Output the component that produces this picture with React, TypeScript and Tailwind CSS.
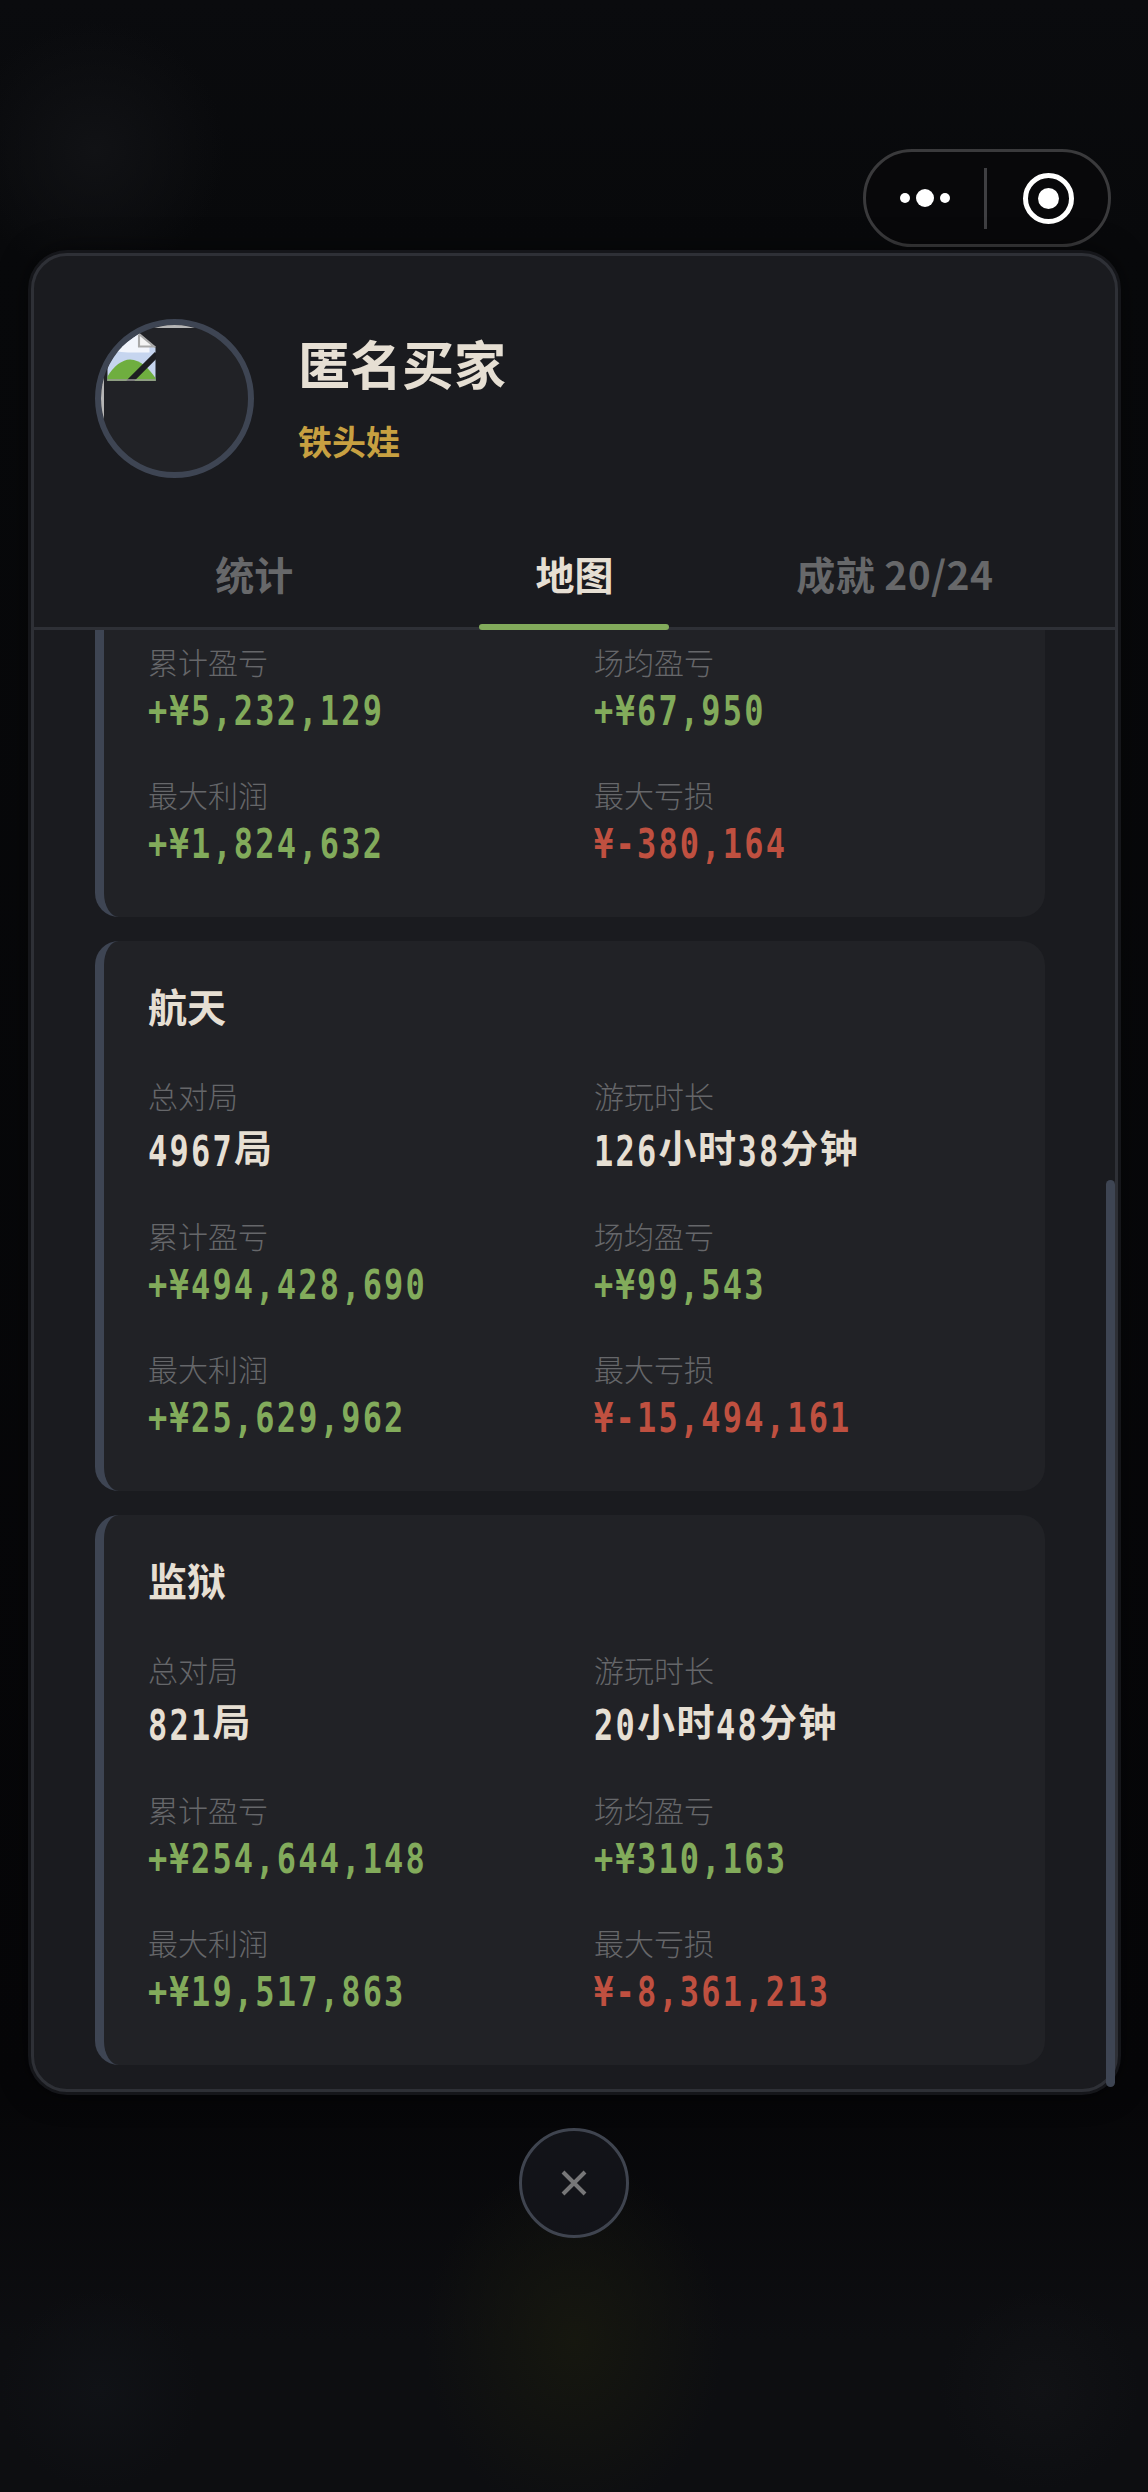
import React from "react";

const cjk = "font-['Noto_Sans_CJK_SC',sans-serif]";

function Val({ text, color, first }: { text: string; color: string; first?: boolean }) {
  const parts = text.match(/[\u4e00-\u9fff]+|[^\u4e00-\u9fff]+/g) ?? [];
  return (
    <div className={`${first ? "h-[58px]" : "h-[52px]"} leading-[52px] whitespace-nowrap ${color}`}>
      {parts.map((p, i) =>
        /[\u4e00-\u9fff]/.test(p) ? (
          <span key={i} className={`${cjk} font-bold text-[38px] tracking-[1.5px]`}>{p}</span>
        ) : (
          <span
            key={i}
            className={`inline-block ${first ? "scale-y-[1.35]" : "scale-y-[1.28]"} font-['DejaVu_Sans_Mono',monospace] font-bold text-[32px] tracking-[2.2px]`}
          >
            {p}
          </span>
        )
      )}
    </div>
  );
}

function Stat({ label, value, color, first }: { label: string; value: string; color: string; first?: boolean }) {
  return (
    <div>
      <div className={`${cjk} h-[42px] ${first ? "mb-[4px]" : "mb-[3px]"} text-[30px] leading-[42px] font-light text-[#66676a]`}>{label}</div>
      <Val text={value} color={color} first={first} />
    </div>
  );
}

const G = "text-[#82ab5b]";
const R = "text-[#bf5040]";
const W = "text-[#e6dfd3]";

function Bottom({ rows }: { rows: [string, string, string, string] }) {
  return (
    <div className="grid grid-cols-2 gap-x-[39px] gap-y-[36px]">
      <Stat label="累计盈亏" value={rows[0]} color={G} />
      <Stat label="场均盈亏" value={rows[1]} color={G} />
      <Stat label="最大利润" value={rows[2]} color={G} />
      <Stat label="最大亏损" value={rows[3]} color={R} />
    </div>
  );
}

function Card({ title, head, rows }: { title: string; head: [string, string]; rows: [string, string, string, string] }) {
  return (
    <div className="w-[950px] h-[550px] shrink-0 rounded-[24px] border-l-[9px] border-[#3e4553] bg-[#212226] px-[44px] pt-[37px] pb-[47px]">
      <div className={`${cjk} h-[54px] leading-[54px] mb-[42px] text-[39px] font-bold text-[#e6dfd3]`}>{title}</div>
      <div className="grid grid-cols-2 gap-x-[39px] mb-[36px]">
        <Stat first label="总对局" value={head[0]} color={W} />
        <Stat first label="游玩时长" value={head[1]} color={W} />
      </div>
      <Bottom rows={rows} />
    </div>
  );
}

function BrokenImage() {
  return (
    <svg width="49" height="48" viewBox="0 0 16 16" className="absolute left-[6px] top-[8px]">
      <path d="M0 0H10.5L16 5V16H0Z" fill="#c6d5ef" />
      <path d="M0 0H10.5V4H14V6.5H8C5 6.5 2 6 0 5.5Z" fill="#f2f5fc" />
      <path d="M0 16V14.5C2 11 5 8.8 7.5 8.8C11 8.8 14 12 16 15V16Z" fill="#6fae3f" />
      <path d="M10.5 0.3V4.5H15.5Z" fill="#f4f4f4" stroke="#a9a9a9" strokeWidth="0.7" />
      <path d="M7 16.5L16.5 7" stroke="#1d1e22" strokeWidth="2" />
      <path d="M0 15.7H16" stroke="#9a9a9a" strokeWidth="0.5" />
    </svg>
  );
}

export default function App() {
  return (
    <div className="relative w-[1148px] h-[2492px] overflow-hidden flex flex-col bg-[radial-gradient(circle_at_95px_150px,#111215_0,transparent_130px),radial-gradient(ellipse_150px_180px_at_574px_2340px,#16170f_0,transparent_100%),radial-gradient(circle_at_100px_2390px,#101216_0,transparent_100px),radial-gradient(circle_at_1040px_2390px,#111215_0,transparent_100px),linear-gradient(to_bottom,#0a0b0e_0,#08090b_240px,#060608_2100px,#0d0e11_2340px,#0d0e11_100%)]">
      <div className="h-[149px] shrink-0" />
      <div className="self-end mr-[37px] w-[248px] h-[98px] shrink-0 rounded-full border-[3px] border-[#3a3a3c] bg-[#08080a] flex items-center">
        <div className="flex-1 flex items-center justify-center gap-[6px]">
          <span className="w-[10px] h-[10px] rounded-full bg-white" />
          <span className="w-[18px] h-[18px] rounded-full bg-white" />
          <span className="w-[10px] h-[10px] rounded-full bg-white" />
        </div>
        <div className="w-[3px] h-[61px] bg-[#3f3f42]" />
        <div className="w-[121px] flex items-center justify-center pl-[2px]">
          <div className="w-[51px] h-[51px] rounded-full border-[5px] border-white flex items-center justify-center">
            <div className="w-[21px] h-[21px] rounded-full bg-white" />
          </div>
        </div>
      </div>

      <div className="relative mt-[6px] ml-[31px] w-[1087px] h-[1839px] shrink-0 rounded-[36px] border-[3px] border-[#2e3036] bg-[#1a1b1f] shadow-[0_0_0_3px_#15161a,0_0_30px_rgba(0,0,0,0.6)] flex flex-col overflow-hidden">
        <div className="h-[374px] shrink-0 flex flex-col">
          <div className="flex items-center gap-[44px] pl-[61px] pt-[63px]">
            <div className="relative w-[159px] h-[159px] shrink-0 rounded-full border-[6px] border-[#3e4553] bg-[#212226] overflow-hidden">
              <div className="absolute inset-0 border-t-[3px] border-l-[3px] border-[#b5b5b5]" />
              <BrokenImage />
            </div>
            <div className={`${cjk} flex flex-col pb-[5px]`}>
              <div className="h-[72px] leading-[72px] text-[52px] font-bold text-[#e6dfd3]">匿名买家</div>
              <div className="mt-[18px] h-[48px] leading-[48px] text-[34px] font-bold text-[#c7a041]">铁头娃</div>
            </div>
          </div>
          <div className={`${cjk} mt-auto relative h-[110px] grid grid-cols-3 px-[60px] border-b-[3px] border-[#2e3036] text-[39px] font-bold`}>
            <div className="flex items-center justify-center text-[#67686a]">统计</div>
            <div className="relative flex items-center justify-center text-[#e6dfd3]">
              地图
              <span className="absolute left-[65px] w-[190px] -bottom-[3px] h-[6px] rounded-full bg-[#82ab5b]" />
            </div>
            <div className="flex items-center justify-center text-[#67686a] whitespace-nowrap tracking-[0.4px]">成就 20/24</div>
          </div>
        </div>
        <div className="flex-1 min-h-0 overflow-hidden flex flex-col justify-end gap-[24px] pl-[61px] pb-[24px]">
          <div className="w-[950px] shrink-0 rounded-b-[24px] border-l-[9px] border-[#3e4553] bg-[#212226] px-[44px] pt-[13px] pb-[47px]">
            <Bottom rows={["+¥5,232,129", "+¥67,950", "+¥1,824,632", "¥-380,164"]} />
          </div>
          <Card title="航天" head={["4967局", "126小时38分钟"]} rows={["+¥494,428,690", "+¥99,543", "+¥25,629,962", "¥-15,494,161"]} />
          <Card title="监狱" head={["821局", "20小时48分钟"]} rows={["+¥254,644,148", "+¥310,163", "+¥19,517,863", "¥-8,361,213"]} />
        </div>
      </div>
      <div className="absolute left-[1106px] top-[1180px] w-[9px] h-[907px] rounded-full bg-[#3e4553]" />

      <div className="self-center mt-[36px] w-[110px] h-[110px] shrink-0 rounded-full border-[3px] border-[#3f444f] bg-[#121318] flex items-center justify-center">
        <svg width="26" height="26" viewBox="0 0 26 26">
          <path d="M2 2L24 24M24 2L2 24" stroke="#777778" strokeWidth="4" fill="none" />
        </svg>
      </div>
    </div>
  );
}
